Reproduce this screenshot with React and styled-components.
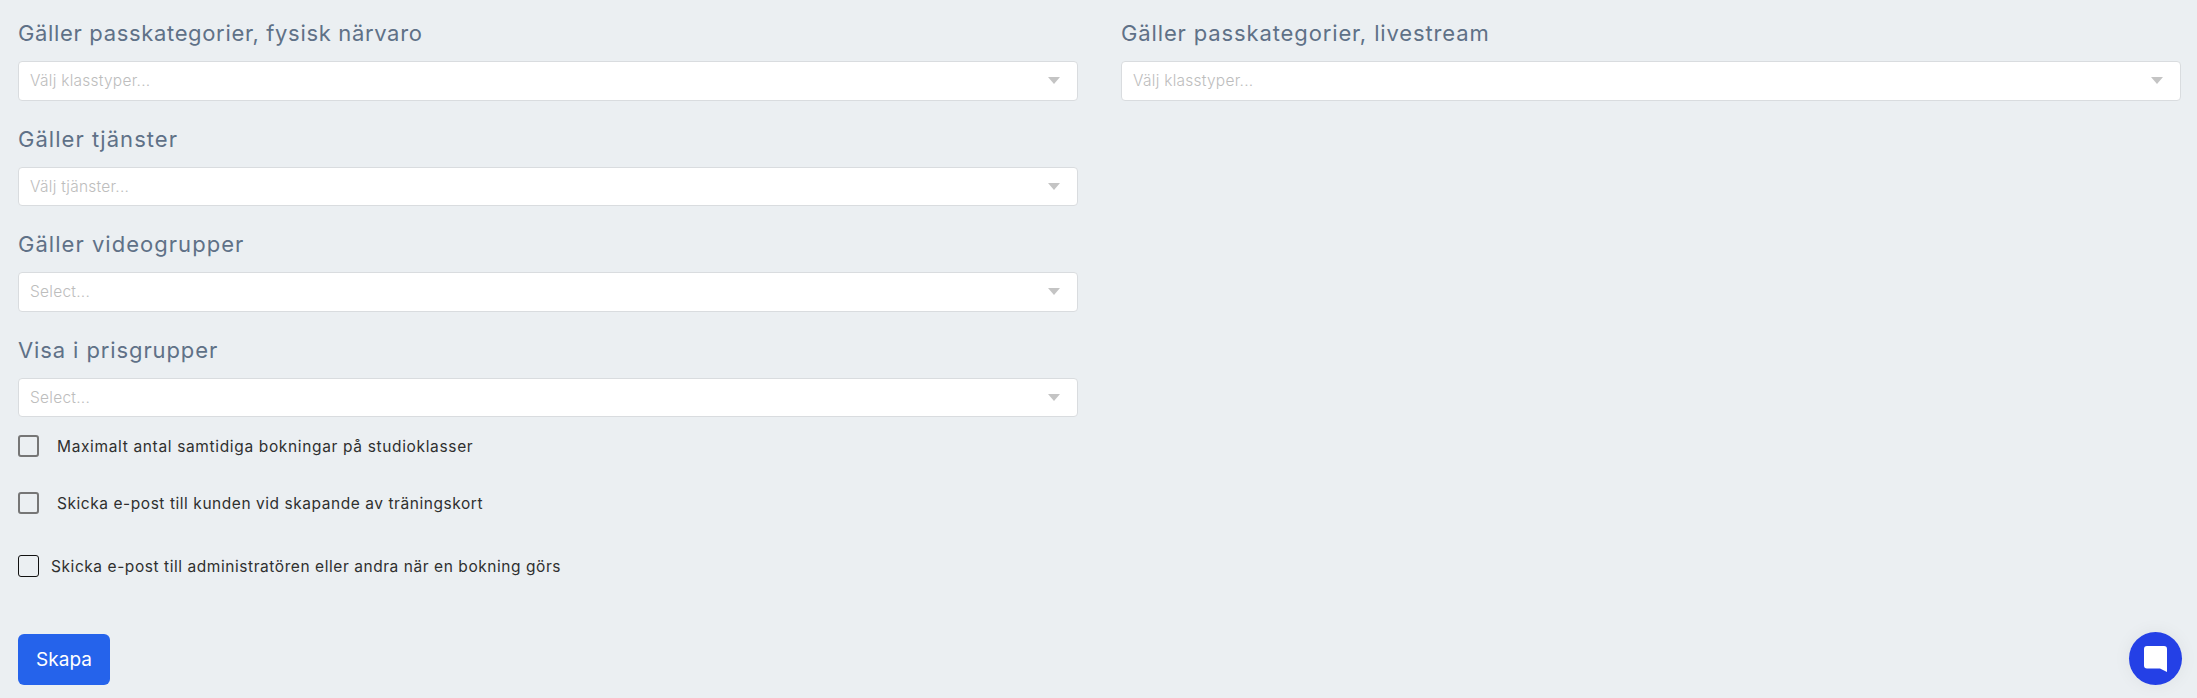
import React from "react";
import styled, { createGlobalStyle } from "styled-components";

const Global = createGlobalStyle`
  html, body { margin: 0; padding: 0; background: #ebeff2; }
  body { font-family: Inter, "Open Sans", "Liberation Sans", sans-serif; overflow: hidden; }
`;
const Page = styled.div`
  width: 2197px; height: 698px; box-sizing: border-box; padding: 0 18px; position: relative;
`;
const Columns = styled.div`
  display: grid; grid-template-columns: 1060px 1060px; column-gap: 43px; height: 416px;
`;
const Column = styled.div`display: flex; flex-direction: column; padding-top: 19px;`;
const Field = styled.div`display: flex; flex-direction: column; height: 105.5px;`;
const Heading = styled.label`
  display: block; height: 29px; margin-bottom: 13px; line-height: 29px; font-size: 22px; font-weight: 400;
  color: #5f7187; letter-spacing: ${p => p.$track}px;
`;
const SelectBox = styled.div`
  box-sizing: border-box; height: 39.5px; background: #fff; border: 1px solid #d9dcdf; border-radius: 4px;
  display: flex; align-items: center; justify-content: space-between; padding: 0 17px 0 11px;
`;
const Placeholder = styled.span`font-size: 15.5px; color: #bdbdbd; font-weight: 300; letter-spacing: 0.25px;`;
const Caret = styled.span`
  width: 0; height: 0; border-left: 6.5px solid transparent; border-right: 6.5px solid transparent;
  border-top: 7px solid #c4c4c4;
`;
const Checks = styled.div`display: flex; flex-direction: column;`;
const CheckRow = styled.div`
  display: flex; align-items: center; height: 22px; margin-top: ${p => p.$top}px; gap: ${p => p.$gap}px;
`;
const Box = styled.span`
  box-sizing: border-box; width: 21px; height: 22px; border-radius: 3px; background: transparent;
  border: ${p => (p.$dark ? "1.5px solid #111" : "2px solid #767676")};
`;
const CheckLabel = styled.span`
  font-size: 15.5px; font-weight: 400; color: #2f2f2f; letter-spacing: ${p => p.$track}px;
`;
const Submit = styled.button`
  display: block; margin-top: 57px; width: 92px; height: 51px; background: #2563eb; color: #fff; border: 0;
  border-radius: 6px; font-family: inherit; font-size: 19px; padding: 0;
`;
const Chat = styled.div`
  position: absolute; left: 2129px; top: 632px; width: 53px; height: 53px; border-radius: 50%; background: #2440e6;
  display: flex; align-items: center; justify-content: center; box-shadow: 0 0 18px rgba(0,0,0,.06);
`;

const Sel = ({ title, ph, track }) => (
  <Field>
    <Heading $track={track}>{title}</Heading>
    <SelectBox><Placeholder>{ph}</Placeholder><Caret /></SelectBox>
  </Field>
);

export default function App() {
  return (
    <Page>
      <Global />
      <Columns>
        <Column>
          <Sel track={0.66} title="Gäller passkategorier, fysisk närvaro" ph="Välj klasstyper..." />
          <Sel track={1.03} title="Gäller tjänster" ph="Välj tjänster..." />
          <Sel track={1.03} title="Gäller videogrupper" ph="Select..." />
          <Sel track={0.89} title="Visa i prisgrupper" ph="Select..." />
        </Column>
        <Column>
          <Sel track={0.87} title="Gäller passkategorier, livestream" ph="Välj klasstyper..." />
        </Column>
      </Columns>
      <Checks>
        <CheckRow $top={19} $gap={18}><Box /><CheckLabel $track={0.65}>Maximalt antal samtidiga bokningar på studioklasser</CheckLabel></CheckRow>
        <CheckRow $top={35} $gap={18}><Box /><CheckLabel $track={0.55}>Skicka e-post till kunden vid skapande av träningskort</CheckLabel></CheckRow>
        <CheckRow $top={41} $gap={12}><Box $dark /><CheckLabel $track={0.56}>Skicka e-post till administratören eller andra när en bokning görs</CheckLabel></CheckRow>
      </Checks>
      <Submit>Skapa</Submit>
      <Chat>
        <svg width="23" height="26" viewBox="0 0 23 26"><path d="M3 0h17a3 3 0 0 1 3 3v23l-7-3.5H3a3 3 0 0 1-3-3V3a3 3 0 0 1 3-3z" fill="#fff"/></svg>
      </Chat>
    </Page>
  );
}
